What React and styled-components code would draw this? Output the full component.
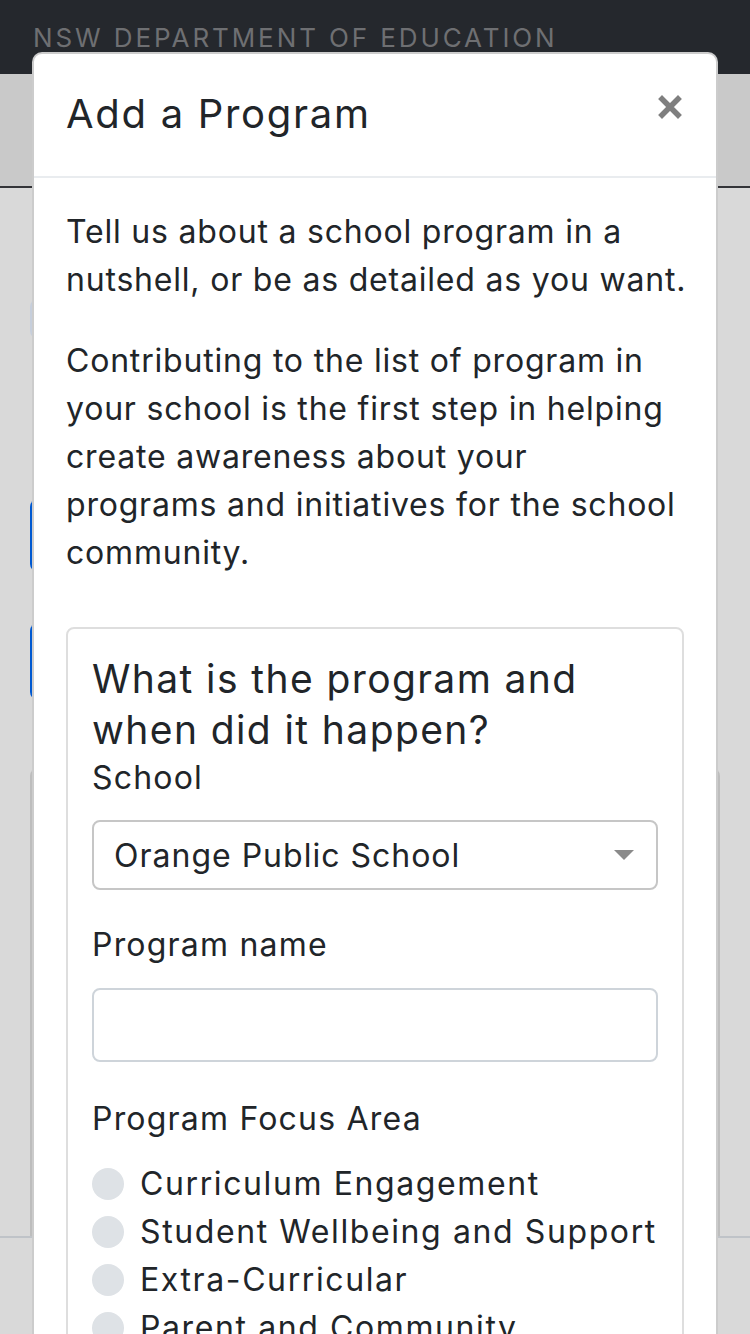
import React from 'react';
import styled, { createGlobalStyle } from 'styled-components';

const FONT = `Inter, 'Noto Sans', 'DejaVu Sans', sans-serif`;

const GlobalStyle = createGlobalStyle`
  body {
    margin: 0;
    background-color: #d9d9d9;
    font-family: ${FONT};
    color: #212529;
  }
  * {
    box-sizing: border-box;
  }
`;

const Page = styled.div`
  position: relative;
  width: 750px;
  height: 1334px;
  overflow: hidden;
  background-color: #d9d9d9;
`;

/* page behind the modal, already dimmed by the backdrop */
const TopBar = styled.div`
  height: 74px;
  background-color: #25282d;
  padding-left: 33px;
  display: flex;
  align-items: center;
`;

const Brand = styled.div`
  color: #6e6f72;
  font-size: 26px;
  letter-spacing: 2.9px;
  white-space: nowrap;
`;

const SubNav = styled.div`
  height: 114px;
  background-color: #c9c9c9;
  border-bottom: 2px solid #333438;
`;

const Content = styled.div`
  padding: 0 30px;
`;

// only the first stroke of the page heading peeks out from under the modal
const HeadingStub = styled.div`
  margin: 42px 0 0 2px;
  width: 4px;
  height: 19px;
  background-color: #1d1d1d;
`;

const SearchBox = styled.div`
  margin-top: 50px;
  width: 420px;
  height: 40px;
  border-radius: 8px;
  background-color: #c6cedb;
`;

const BlueButton = styled.div`
  margin-top: ${({ gap }) => gap}px;
  width: 300px;
  height: ${({ h }) => h}px;
  border-radius: 8px;
  background-color: #0059d1;
`;

const BackCard = styled.div`
  margin-top: 68px;
  height: 468px;
  border: 3px solid #bdbdbd;
  border-bottom: none;
  border-radius: 8px 8px 0 0;
`;

const Footer = styled.div`
  border-top: 2px solid #bfc3c8;
  height: 200px;
`;

/* modal */
const Modal = styled.div`
  position: absolute;
  top: 52px;
  left: 32px;
  width: 686px;
  background-color: #fff;
  border: 2px solid rgba(0, 0, 0, 0.2);
  border-radius: 10px;
`;

const ModalHeader = styled.div`
  display: flex;
  justify-content: space-between;
  align-items: flex-start;
  padding: 30px 32px 32px;
  border-bottom: 2px solid #e9ecef;
`;

const ModalTitle = styled.h5`
  margin: 0;
  font-size: 40px;
  line-height: 60px;
  font-weight: 400;
  letter-spacing: 1.7px;
`;

const Close = styled.button`
  display: flex;
  border: none;
  background: none;
  padding: 0;
  margin: 11px 2px 0 0;
  color: #7f7f7f;
  cursor: pointer;
`;

const ModalBody = styled.div`
  padding: 30px 32px 32px;
`;

const Para = styled.p`
  margin: 0 0 33px;
  font-size: 32px;
  line-height: 48px;
  letter-spacing: 0.8px;
  white-space: nowrap;
`;

const Card = styled.div`
  margin-top: 50px;
  border: 2px solid #dedede;
  border-radius: 8px;
  padding: 24px;
`;

const CardTitle = styled.h5`
  margin: 0 0 -1px;
  font-size: 39px;
  line-height: 51px;
  font-weight: 400;
  letter-spacing: 1.4px;
  white-space: nowrap;
`;

const FormGroup = styled.div`
  margin-bottom: ${({ mb }) => mb}px;
`;

const Label = styled.div`
  font-size: 32px;
  line-height: 48px;
  letter-spacing: 1.2px;
  margin-bottom: ${({ mb }) => mb}px;
`;

const Select = styled.div`
  height: 70px;
  display: flex;
  align-items: center;
  justify-content: space-between;
  padding: 0 22px 0 20px;
  border: 2px solid #c6c6c6;
  border-radius: 8px;
  font-size: 32px;
  letter-spacing: 1px;
`;

const Caret = styled.span`
  width: 0;
  height: 0;
  border-left: 10px solid transparent;
  border-right: 10px solid transparent;
  border-top: 10px solid #8a8a8a;
`;

const Input = styled.div`
  height: 74px;
  border: 2px solid #ced4da;
  border-radius: 8px;
`;

const RadioRow = styled.div`
  display: flex;
  align-items: center;
  gap: 16px;
  font-size: 32px;
  line-height: 48px;
  letter-spacing: 1.6px;
  white-space: nowrap;
`;

const RadioDot = styled.span`
  width: 32px;
  height: 32px;
  border-radius: 50%;
  background-color: #dee2e6;
  flex-shrink: 0;
`;

const focusAreas = [
  'Curriculum Engagement',
  'Student Wellbeing and Support',
  'Extra-Curricular',
  'Parent and Community',
];

export default function App() {
  return (
    <Page>
      <GlobalStyle />
      <TopBar>
        <Brand>NSW DEPARTMENT OF EDUCATION</Brand>
      </TopBar>
      <SubNav />
      <Content>
        <HeadingStub />
        <SearchBox />
        <BlueButton gap={160} h={73} />
        <BlueButton gap={51} h={77} />
        <BackCard />
      </Content>
      <Footer />

      <Modal>
        <ModalHeader>
          <ModalTitle>Add a Program</ModalTitle>
          <Close aria-label="Close">
            <svg width="24" height="24" viewBox="0 0 24 24">
              <path
                d="M4 4 L20 20 M20 4 L4 20"
                stroke="currentColor"
                strokeWidth="5.5"
                strokeLinecap="square"
              />
            </svg>
          </Close>
        </ModalHeader>
        <ModalBody>
          <Para>
            Tell us about a school program in a<br />
            nutshell, or be as detailed as you want.
          </Para>
          <Para>
            Contributing to the list of program in<br />
            your school is the first step in helping<br />
            create awareness about your<br />
            programs and initiatives for the school<br />
            community.
          </Para>
          <Card>
            <CardTitle>
              What is the program and<br />
              when did it happen?
            </CardTitle>
            <FormGroup mb={31}>
              <Label mb={18}>School</Label>
              <Select>
                Orange Public School
                <Caret />
              </Select>
            </FormGroup>
            <FormGroup mb={33}>
              <Label mb={19}>Program name</Label>
              <Input />
            </FormGroup>
            <Label mb={17}>Program Focus Area</Label>
            {focusAreas.map((area) => (
              <RadioRow key={area}>
                <RadioDot />
                {area}
              </RadioRow>
            ))}
          </Card>
        </ModalBody>
      </Modal>
    </Page>
  );
}
